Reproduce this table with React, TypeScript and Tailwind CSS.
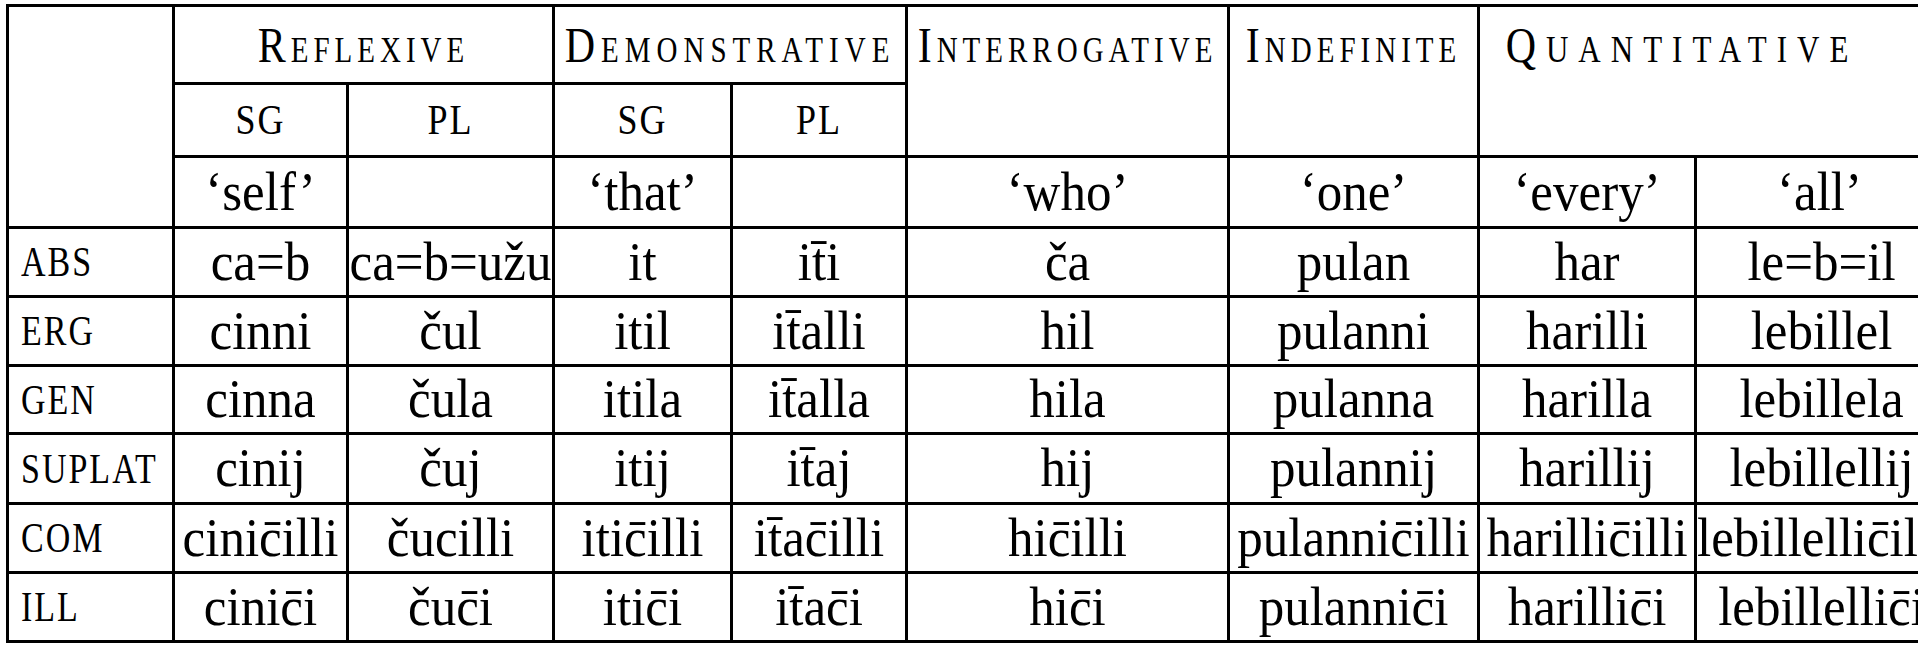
import React from "react";

const serif = { fontFamily: '"Liberation Serif", "Times New Roman", serif' };

type Row = { label: string; cells: string[] };

const M = "\u0304";
const rows: Row[] = [
  { label: "ABS", cells: ["ca=b", "ca=b=užu", "it", `it${M}i`, "ča", "pulan", "har", "le=b=il"] },
  { label: "ERG", cells: ["cinni", "čul", "itil", `it${M}alli`, "hil", "pulanni", "harilli", "lebillel"] },
  { label: "GEN", cells: ["cinna", "čula", "itila", `it${M}alla`, "hila", "pulanna", "harilla", "lebillela"] },
  { label: "SUPLAT", cells: ["cinij", "čuj", "itij", `it${M}aj`, "hij", "pulannij", "harillij", "lebillellij"] },
  {
    label: "COM",
    cells: [`cinic${M}illi`, "čucilli", `itic${M}illi`, `it${M}ac${M}illi`, `hic${M}illi`, `pulannic${M}illi`, `harillic${M}illi`, `lebillellic${M}illi`],
  },
  {
    label: "ILL",
    cells: [`cinic${M}i`, `čuc${M}i`, `itic${M}i`, `it${M}ac${M}i`, `hic${M}i`, `pulannic${M}i`, `harillic${M}i`, `lebillellic${M}i`],
  },
];

const rowH = ["h-[69px]", "h-[69px]", "h-[68px]", "h-[70px]", "h-[69px]", "h-[69px]"];

function Cat({ first, rest, ls, small = "text-[29px]" }: { first: string; rest: string; ls: string; small?: string }) {
  return (
    <span className={`inline-block scale-y-[1.2] whitespace-nowrap ${ls}`}>
      <span className="text-[42px]">{first}</span>
      <span className={small}>{rest}</span>
    </span>
  );
}

function D({ children }: { children: React.ReactNode }) {
  return <span className="inline-block scale-y-[1.08] whitespace-nowrap">{children}</span>;
}

export default function App() {
  const td = "border-[3px] border-black p-0 text-center align-middle";
  const sg = `${td} text-[36px] tracking-[2px]`;
  return (
    <div className="w-[1918px] h-[646px] overflow-hidden bg-white">
      <div className="pt-[4px] pl-[6px]">
        <table className="table-fixed border-collapse text-black leading-none w-[1940px]" style={serif}>
          <colgroup>
            <col className="w-[166px]" />
            <col className="w-[174px]" />
            <col className="w-[206px]" />
            <col className="w-[178px]" />
            <col className="w-[175px]" />
            <col className="w-[322px]" />
            <col className="w-[250px]" />
            <col className="w-[217px]" />
            <col className="w-[252px]" />
          </colgroup>
          <tbody>
            <tr className="h-[78px]">
              <td rowSpan={3} className={td}></td>
              <td colSpan={2} className={td}>
                <Cat first="R" rest="EFLEXIVE" ls="tracking-[5px]" />
              </td>
              <td colSpan={2} className={td}>
                <Cat first="D" rest="EMONSTRATIVE" ls="tracking-[6px]" />
              </td>
              <td rowSpan={2} className={`${td} align-top`}>
                <div className="h-[76px] flex items-center justify-center">
                  <Cat first="I" rest="NTERROGATIVE" ls="tracking-[5px]" />
                </div>
              </td>
              <td rowSpan={2} className={`${td} align-top`}>
                <div className="h-[76px] flex items-center justify-center">
                  <Cat first="I" rest="NDEFINITE" ls="tracking-[5px]" />
                </div>
              </td>
              <td colSpan={2} rowSpan={2} className={`${td} align-top`}>
                <div className="h-[76px] flex items-center justify-center pr-[62px]">
                  <Cat first="Q" rest="UANTITATIVE" ls="tracking-[10px]" small="text-[31px]" />
                </div>
              </td>
            </tr>
            <tr className="h-[73px]">
              <td className={sg}><span className="inline-block scale-y-[1.2]">SG</span></td>
              <td className={sg}><span className="inline-block scale-y-[1.2]">PL</span></td>
              <td className={sg}><span className="inline-block scale-y-[1.2]">SG</span></td>
              <td className={sg}><span className="inline-block scale-y-[1.2]">PL</span></td>
            </tr>
            <tr className="h-[71px] text-[51px]">
              <td className={td}><D>‘self’</D></td>
              <td className={td}></td>
              <td className={td}><D>‘that’</D></td>
              <td className={td}></td>
              <td className={td}><D>‘who’</D></td>
              <td className={td}><D>‘one’</D></td>
              <td className={td}><D>‘every’</D></td>
              <td className={`${td} pr-[4px]`}><D>‘all’</D></td>
            </tr>
            {rows.map((r, i) => (
              <tr key={r.label} className={rowH[i]}>
                <td className="border-[3px] border-black align-middle text-left pl-[12px] text-[34px] tracking-[2px]">
                  <span className="inline-block scale-y-[1.25]">{r.label}</span>
                </td>
                {r.cells.map((c, j) => (
                  <td key={j} className={`${td} text-[51px] overflow-visible`}>
                    <D>{c}</D>
                  </td>
                ))}
              </tr>
            ))}
          </tbody>
        </table>
      </div>
    </div>
  );
}
